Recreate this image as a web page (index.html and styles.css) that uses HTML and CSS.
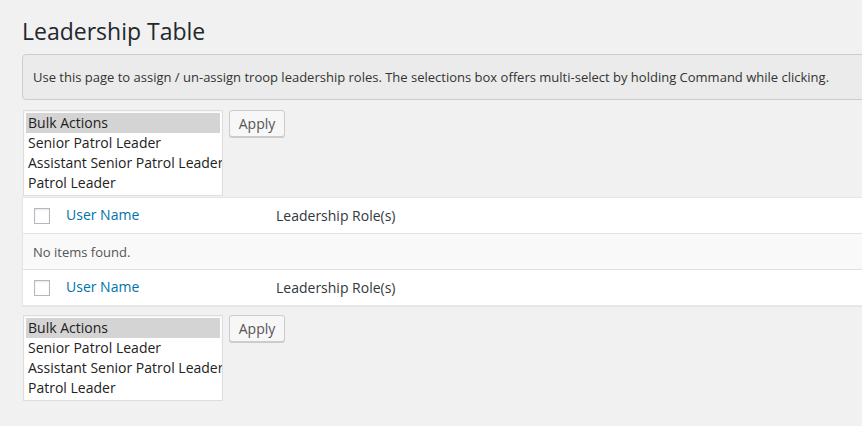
FILE: index.html
```html
<!DOCTYPE html>
<html>
<head>
<meta charset="utf-8">
<link rel="stylesheet" href="styles.css">
</head>
<body>
<div class="wrap">
  <h1 class="title">Leadership Table</h1>
  <div class="notice">Use this page to assign / un-assign troop leadership roles. The selections box offers multi-select by holding Command while clicking.</div>

  <div class="bulk bulk-top">
    <div class="listbox">
      <div class="opt selected">Bulk Actions</div>
      <div class="opt">Senior Patrol Leader</div>
      <div class="opt">Assistant Senior Patrol Leader</div>
      <div class="opt">Patrol Leader</div>
    </div>
    <button class="btn">Apply</button>
  </div>

  <div class="table">
    <div class="row head">
      <div class="cb"><span class="check"></span></div>
      <div class="col-name"><a class="link">User Name</a></div>
      <div class="col-role">Leadership Role(s)</div>
    </div>
    <div class="row empty">No items found.</div>
    <div class="row head">
      <div class="cb"><span class="check"></span></div>
      <div class="col-name"><a class="link">User Name</a></div>
      <div class="col-role">Leadership Role(s)</div>
    </div>
  </div>

  <div class="bulk bulk-bottom">
    <div class="listbox">
      <div class="opt selected">Bulk Actions</div>
      <div class="opt">Senior Patrol Leader</div>
      <div class="opt">Assistant Senior Patrol Leader</div>
      <div class="opt">Patrol Leader</div>
    </div>
    <button class="btn">Apply</button>
  </div>
</div>
</body>
</html>
```
FILE: styles.css
```css
html, body {
  margin: 0;
  padding: 0;
  overflow: hidden;
  background: #f1f1f1;
}
body {
  font-family: "Open Sans", "Noto Sans", sans-serif;
  color: #444;
  width: 862px;
  height: 426px;
}
.wrap {
  margin-left: 22px;
  width: 880px;
  padding-top: 17px;
}
.title {
  margin: 0;
  font-size: 23px;
  line-height: 29px;
  font-weight: 400;
  color: #23282d;
}
.notice {
  margin-top: 8px;
  height: 44px;
  box-sizing: content-box;
  border: 1px solid #cccccc;
  border-radius: 4px;
  background: #ebebeb;
  padding: 0 0 0 10px;
  font-size: 13px;
  line-height: 44px;
  color: #333;
  white-space: nowrap;
}
.bulk {
  display: flex;
  align-items: flex-start;
  gap: 6px;
  margin-left: 1px;
}
.bulk-top { margin-top: 10px; }
.bulk-bottom { margin-top: 9px; }
.listbox {
  width: 194px;
  height: 80px;
  border: 1px solid #dddddd;
  background: #fff;
  padding: 2px 2px 2px 2px;
  overflow: hidden;
  box-shadow: inset 0 1px 2px rgba(0,0,0,0.05);
}
.opt {
  height: 20px;
  line-height: 20px;
  font-size: 14px;
  color: #222;
  padding-left: 2px;
  white-space: nowrap;
}
.opt.selected {
  background: #d4d4d4;
}
.btn {
  font-family: inherit;
  font-size: 14px;
  height: 27px;
  width: 56px;
  padding: 0;
  margin: 0;
  border: 1px solid #cccccc;
  border-radius: 3px;
  background: #f7f7f7;
  color: #555;
  box-shadow: 0 1px 0 #ccc;
  line-height: 25px;
}
.table {
  margin-top: 1px;
  background: #fff;
  border: 1px solid #e5e5e5;
  border-right: none;
  box-shadow: 0 1px 1px rgba(0,0,0,0.04);
}
.row {
  display: flex;
  align-items: center;
  height: 35px;
  border-bottom: 1px solid #e1e1e1;
}
.row:last-child { border-bottom: none; }
.cb {
  width: 43px;
  padding-left: 11px;
  box-sizing: border-box;
  display: flex;
  align-items: center;
}
.check {
  display: block;
  width: 14px;
  height: 14px;
  border: 1px solid #b4b9be;
  background: #fff;
  box-shadow: inset 0 1px 2px rgba(0,0,0,0.1);
}
.col-name {
  width: 210px;
  font-size: 14px;
  margin-top: -3px;
}
.link {
  color: #0073aa;
}
.col-role {
  font-size: 14px;
  color: #32373c;
}
.row.empty {
  background: #f9f9f9;
  padding-left: 10px;
  font-size: 13px;
  color: #555;
}
```
